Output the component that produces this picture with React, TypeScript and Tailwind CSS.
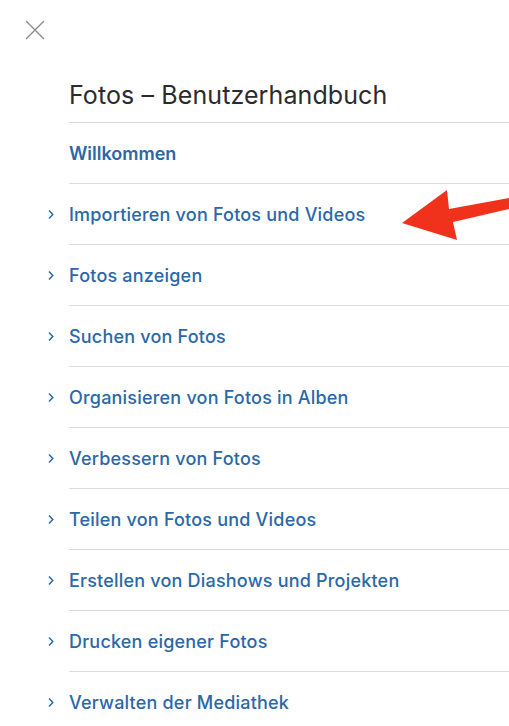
const chapters = [
  "Importieren von Fotos und Videos",
  "Fotos anzeigen",
  "Suchen von Fotos",
  "Organisieren von Fotos in Alben",
  "Verbessern von Fotos",
  "Teilen von Fotos und Videos",
  "Erstellen von Diashows und Projekten",
  "Drucken eigener Fotos",
  "Verwalten der Mediathek",
];

function Chevron() {
  return (
    <svg width="8" height="11" viewBox="0 0 8 11" className="text-[#2a68a8]">
      <path d="M2 1.5 L5.8 5.5 L2 9.5" fill="none" stroke="currentColor" strokeWidth="1.5" />
    </svg>
  );
}

export default function App() {
  return (
    <div className="relative h-[726px] w-[509px] overflow-hidden bg-white font-['Inter',sans-serif]">
      <div className="pl-[25px] pt-[20px]">
        <svg width="20" height="20" viewBox="0 0 20 20">
          <path d="M1 1 L19 19 M19 1 L1 19" stroke="#8a8a8a" strokeWidth="1.3" />
        </svg>
      </div>

      <div className="ml-[69px] mt-[40px]">
        <h1 className="h-[42px] text-[25px] leading-[30px] tracking-[0.1px] text-[#2b2b2b]">Fotos – Benutzerhandbuch</h1>
        <div className="border-t border-[#dcdcdc]" />
        <ul>
          <li className="flex h-[61px] items-center border-b border-[#dcdcdc]">
            <span className="text-[18px] font-semibold text-[#2a68a8]">Willkommen</span>
          </li>
          {chapters.map((c) => (
            <li key={c} className="relative flex h-[61px] items-center border-b border-[#dcdcdc]">
              <span className="absolute left-[-22px] top-[25px]">
                <Chevron />
              </span>
              <span className="text-[18px] font-medium tracking-[0.2px] text-[#2a68a8]">{c}</span>
            </li>
          ))}
        </ul>
      </div>

      <svg className="absolute left-0 top-0" width="509" height="726" viewBox="0 0 509 726">
        <polygon
          points="402,223 447,190 449,209 509,198 509,209 453,222 457,240"
          fill="#f0321c"
        />
      </svg>
    </div>
  );
}
